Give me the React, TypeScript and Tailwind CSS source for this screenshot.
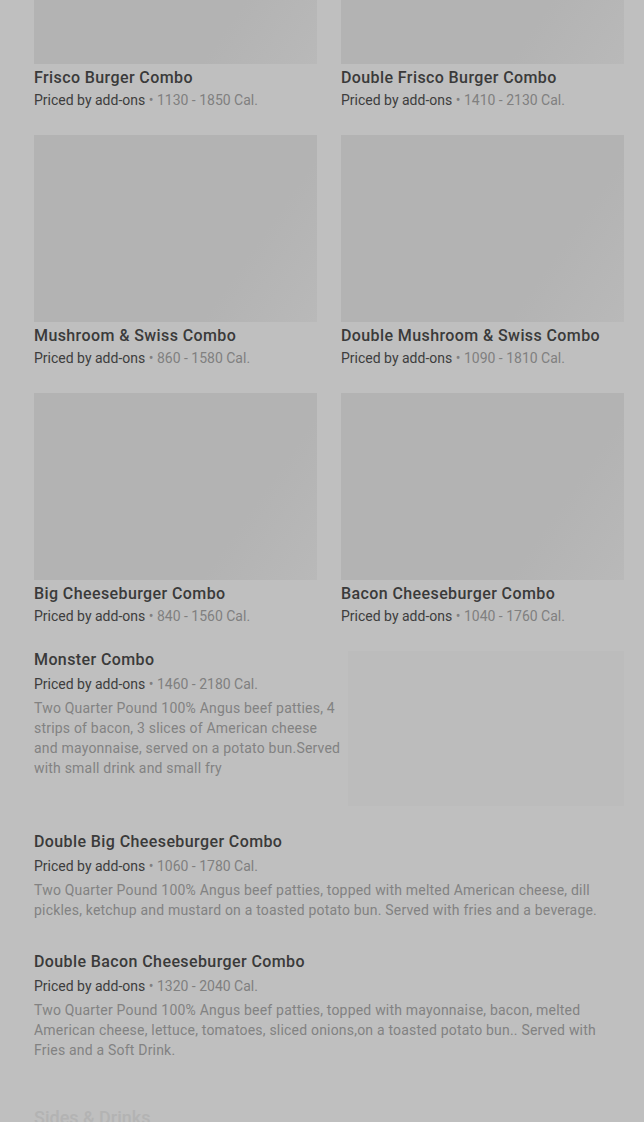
import React from 'react';

interface GridItem {
  name: string;
  cal: string;
}

interface ListItem {
  name: string;
  cal: string;
  desc: string;
  image?: boolean;
}

const gridItems: GridItem[] = [
  { name: 'Frisco Burger Combo', cal: '1130 - 1850 Cal.' },
  { name: 'Double Frisco Burger Combo', cal: '1410 - 2130 Cal.' },
  { name: 'Mushroom & Swiss Combo', cal: '860 - 1580 Cal.' },
  { name: 'Double Mushroom & Swiss Combo', cal: '1090 - 1810 Cal.' },
  { name: 'Big Cheeseburger Combo', cal: '840 - 1560 Cal.' },
  { name: 'Bacon Cheeseburger Combo', cal: '1040 - 1760 Cal.' }
];

const listItems: ListItem[] = [
  {
    name: 'Monster Combo',
    cal: '1460 - 2180 Cal.',
    desc: 'Two Quarter Pound 100% Angus beef patties, 4 strips of bacon, 3 slices of American cheese and mayonnaise, served on a potato bun.Served with small drink and small fry',
    image: true
  },
  {
    name: 'Double Big Cheeseburger Combo',
    cal: '1060 - 1780 Cal.',
    desc: 'Two Quarter Pound 100% Angus beef patties, topped with melted American cheese, dill pickles, ketchup and mustard on a toasted potato bun. Served with fries and a beverage.'
  },
  {
    name: 'Double Bacon Cheeseburger Combo',
    cal: '1320 - 2040 Cal.',
    desc: 'Two Quarter Pound 100% Angus beef patties, topped with mayonnaise, bacon, melted American cheese, lettuce, tomatoes, sliced onions,on a toasted potato bun.. Served with Fries and a Soft Drink.'
  }
];

function Price({ cal }: { cal: string }) {
  return (
    <div className="text-sm leading-5 text-[#3d3d3d]">
      Priced by add-ons <span className="text-[#808080]">• {cal}</span>
    </div>
  );
}

function GridCard({ item }: { item: GridItem }) {
  return (
    <div>
      <div className="h-[187px] bg-[linear-gradient(125deg,#b3b3b3_0%,#b3b3b3_72%,#b9b9b9_100%)]" />
      <div className="mt-[2px] text-base font-medium leading-6 tracking-[0.4px] text-[#3a3a3a]">
        {item.name}
      </div>
      <Price cal={item.cal} />
    </div>
  );
}

function ListRow({ item }: { item: ListItem }) {
  return (
    <div className="flex">
      <div className={item.image ? 'w-[310px] shrink-0' : 'flex-1'}>
        <div className="text-base font-medium leading-6 tracking-[0.4px] text-[#3a3a3a]">{item.name}</div>
        <div className="mt-[2px]">
          <Price cal={item.cal} />
        </div>
        <p className="mt-[4px] text-sm leading-5 tracking-[0.2px] text-[#828282]">{item.desc}</p>
      </div>
      {item.image && (
        <div className="ml-[4px] mt-[3px] h-[155px] w-[276px] bg-[#bcbcbc]" />
      )}
    </div>
  );
}

export default function App() {
  return (
    <div className="h-[1122px] overflow-hidden bg-[#bfbfbf] font-['Roboto',sans-serif]">
      <div className="mt-[-123px] pl-[34px] pr-[20px]">
        <div className="grid grid-cols-2 gap-x-6 gap-y-[25px]">
          {gridItems.map((item) => (
            <GridCard key={item.name} item={item} />
          ))}
        </div>

        <div className="mt-[22px]">
          <ListRow item={listItems[0]} />
        </div>
        <div className="mt-[24px]">
          <ListRow item={listItems[1]} />
        </div>
        <div className="mt-[30px]">
          <ListRow item={listItems[2]} />
        </div>

        <div className="mt-[46px] text-lg font-medium leading-6 text-[#b3b3b3]">
          Sides & Drinks
        </div>
      </div>
    </div>
  );
}
